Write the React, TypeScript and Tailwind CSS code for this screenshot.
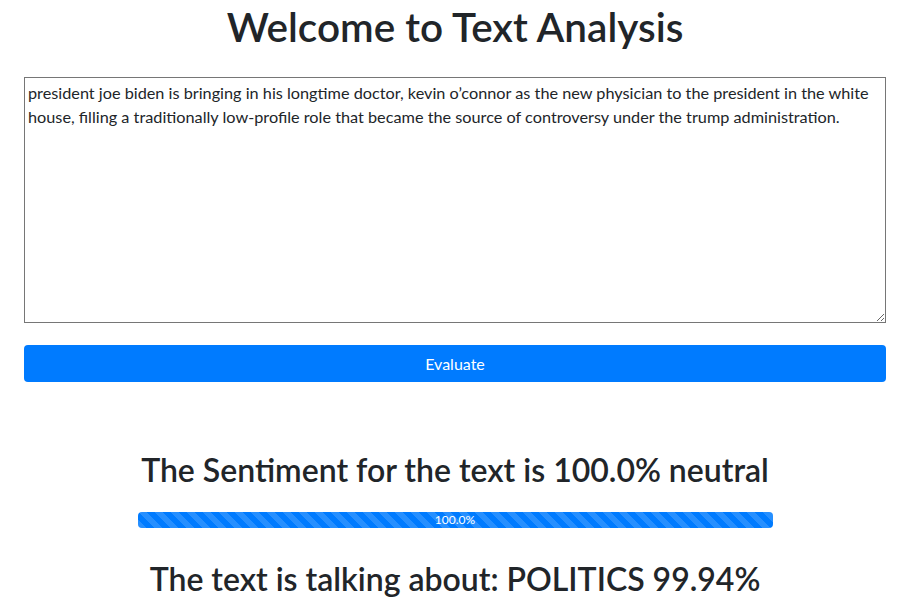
import { useState } from 'react'

const sample =
	'president joe biden is bringing in his longtime doctor, kevin o’connor as the new physician to the president in the white house, filling a traditionally low-profile role that became the source of controversy under the trump administration.'

export default function App() {
	const [text, setText] = useState(sample)

	return (
		<div className="min-h-screen bg-white pl-6 pr-[34px] text-[#212529] font-['Lato','Noto_Sans',sans-serif]">
			<h1 className="pt-[3px] text-center text-[40.5px] font-semibold leading-[48px]">Welcome to Text Analysis</h1>
			<form className="mt-[26px]" onSubmit={e => e.preventDefault()}>
				<textarea
					value={text}
					onChange={e => setText(e.target.value)}
					className="block h-[246px] w-full resize-y border border-[#767676] px-[3px] py-[3px] text-[16.25px] leading-[24px] outline-none"
				/>
				<button
					type="submit"
					className="mt-[22px] block h-[37px] w-full rounded bg-[#007bff] text-[16px] text-white"
				>
					Evaluate
				</button>
			</form>

			<h2 className="mt-[69px] text-center text-[32px] font-semibold leading-[38px]">
				The Sentiment for the text is 100.0% neutral
			</h2>
			<div className="mx-auto mt-[23px] flex h-4 w-[635px] overflow-hidden rounded bg-[#e9ecef]">
				<div className="flex w-full items-center justify-center bg-[#007bff] bg-[linear-gradient(45deg,rgba(255,255,255,.15)_25%,transparent_25%,transparent_50%,rgba(255,255,255,.15)_50%,rgba(255,255,255,.15)_75%,transparent_75%,transparent)] bg-[length:16px_16px] text-[12px] text-white">
					100.0%
				</div>
			</div>
			<h2 className="mt-[32px] text-center text-[32px] font-semibold leading-[38px]">
				The text is talking about: POLITICS 99.94%
			</h2>
		</div>
	)
}
